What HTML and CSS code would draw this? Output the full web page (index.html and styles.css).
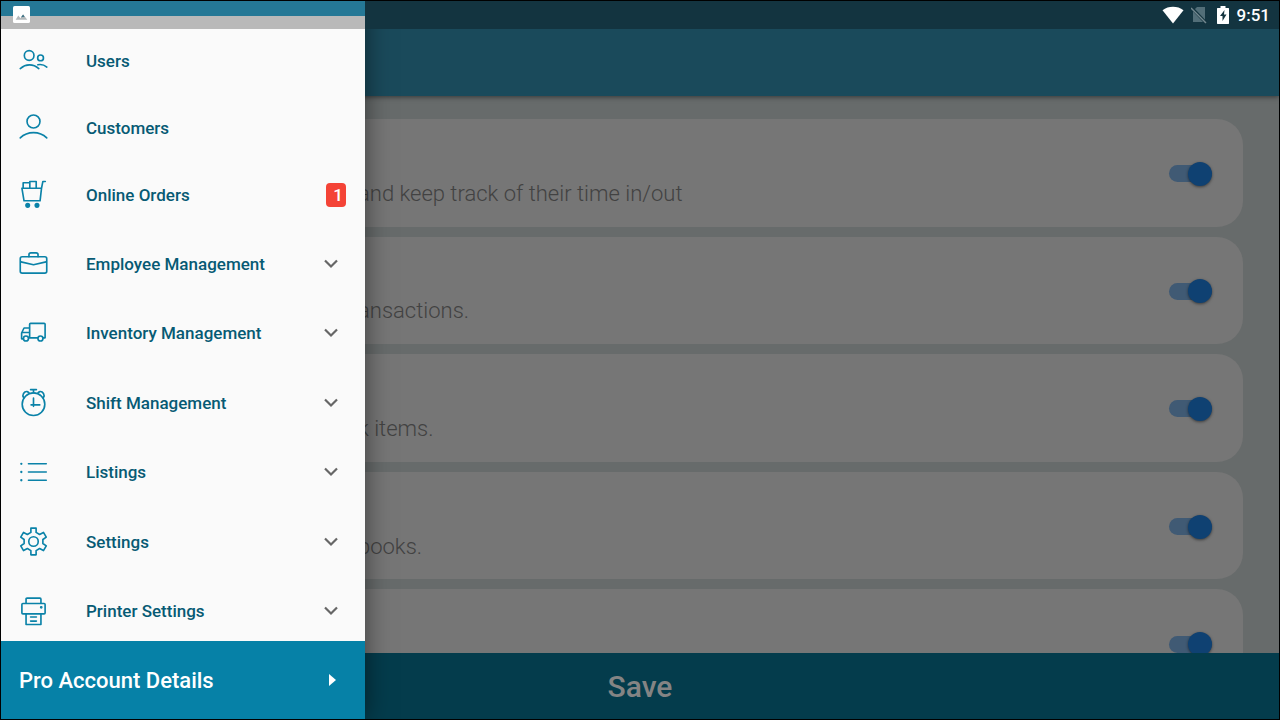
FILE: index.html
```html
<!DOCTYPE html>
<html lang="en">
<head>
<meta charset="utf-8">
<title>Settings</title>
<link rel="stylesheet" href="styles.css">
</head>
<body>
<div class="screen">
  <header class="appbar"></header>
  <main class="content">
    <ul class="cards">
      <li class="card"><label class="note" for="s1">and keep track of their time in/out</label><input class="switch" id="s1" type="checkbox" role="switch" checked></li>
      <li class="card"><label class="note" for="s2">ansactions.</label><input class="switch" id="s2" type="checkbox" role="switch" checked></li>
      <li class="card"><label class="note" for="s3">k items.</label><input class="switch" id="s3" type="checkbox" role="switch" checked></li>
      <li class="card"><label class="note" for="s4">books.</label><input class="switch" id="s4" type="checkbox" role="switch" checked></li>
      <li class="card"><input class="switch" id="s5" type="checkbox" role="switch" aria-label="Option" checked></li>
    </ul>
  </main>
  <button class="save" type="button">Save</button>

  <aside class="drawer">
    <nav class="menu">
      <ul class="group">
        <li><a class="item" href="#">
          <svg class="icon" viewBox="0 0 30 30"><circle cx="10.500" cy="9.800" r="5"/><circle cx="22.300" cy="12.300" r="3"/><path d="M1.300 23.300C7 18.400 14.500 18.200 20.500 23.300M19.500 19.400c3.300-.6 6.700.2 9.300 2.400"/></svg>
          <span class="label">Users</span></a></li>
        <li><a class="item" href="#">
          <svg class="icon" viewBox="0 0 30 30"><circle cx="15" cy="8.800" r="6.700"/><path d="M1.300 25.800c7.500-7.300 19.900-7.300 27.400 0"/></svg>
          <span class="label">Customers</span></a></li>
        <li><a class="item" href="#">
          <svg class="icon" viewBox="0 0 30 30"><path d="M3 8.500h20.300l-1.500 13H5.200zM4.300 8.500V2.800h6.900v5.700M11.200 8.500V1.500h6.600v7M23.300 8.500l1.400-7h2.500"/><circle class="solid" cx="9" cy="26.200" r="1.800"/><circle class="solid" cx="18.600" cy="26.200" r="1.800"/></svg>
          <span class="label">Online Orders</span><span class="badge">1</span></a></li>
      </ul>
      <ul class="group group-wide">
        <li><button class="item" type="button">
          <svg class="icon" viewBox="0 0 30 30"><rect x="1.300" y="8" width="27.400" height="17" rx="2"/><path d="M10.300 8V6q0-2 2-2h5.400q2 0 2 2v2M2 13.300l13 3 13-3"/></svg>
          <span class="label">Employee Management</span><svg class="chevron" viewBox="0 0 16 10"><path d="M2 1.500l6 6 6-6"/></svg></button></li>
        <li><button class="item" type="button">
          <svg class="icon" viewBox="0 0 30 30"><path d="M4.500 20.500H2.700v-6l2.500-5.200H11M11 19.500V5.500q0-1 1-1h14q1 0 1 1v14h-2M19.300 19.500H10M3 14h8"/><circle cx="7.200" cy="20.200" r="2.600"/><circle cx="22.200" cy="20.200" r="2.600"/></svg>
          <span class="label">Inventory Management</span><svg class="chevron" viewBox="0 0 16 10"><path d="M2 1.500l6 6 6-6"/></svg></button></li>
        <li><button class="item" type="button">
          <svg class="icon" viewBox="0 0 30 30"><circle cx="15" cy="16.800" r="11.700"/><path d="M15 10.500v8.500M12.500 17.500h9M12 1.700h6M15 1.700v3.300M4.800 10C2.800 7.200 5.300 3.300 8.400 3.700q1.500.3 2.300 1.800M25.200 10c2-2.800-.5-6.700-3.600-6.300q-1.500.3-2.300 1.800"/></svg>
          <span class="label">Shift Management</span><svg class="chevron" viewBox="0 0 16 10"><path d="M2 1.500l6 6 6-6"/></svg></button></li>
        <li><button class="item" type="button">
          <svg class="icon" viewBox="0 0 30 30"><path d="M9.800 6h18.400M9.800 14.500h18.400M9.800 23h18.400"/><path class="dots" d="M2.400 6h.01M2.400 14.500h.01M2.400 23h.01"/></svg>
          <span class="label">Listings</span><svg class="chevron" viewBox="0 0 16 10"><path d="M2 1.500l6 6 6-6"/></svg></button></li>
        <li><button class="item" type="button">
          <svg class="icon" viewBox="0 0 30 30"><circle cx="15" cy="15" r="4.900"/><path d="M12.300 1.200h5.400v4.400l3.600 2.100 4-2.100 2.900 4.900-3.500 2.400v4.200l3.500 2.400-2.900 4.900-4-2.100-3.600 2.100v4.400h-5.400v-4.400l-3.600-2.100-4 2.100-2.900-4.900 3.500-2.400v-4.200l-3.500-2.400 2.900-4.900 4 2.100 3.600-2.100z"/></svg>
          <span class="label">Settings</span><svg class="chevron" viewBox="0 0 16 10"><path d="M2 1.500l6 6 6-6"/></svg></button></li>
        <li><button class="item" type="button">
          <svg class="icon" viewBox="0 0 30 30"><path d="M7.300 6.700V2.200q0-1 1-1h13.400q1 0 1 1v4.500M7.300 17.500H4q-1 0-1-1V7.700q0-1 1-1h22q1 0 1 1v8.800q0 1-1 1h-3.300M6 17.500h18M7.300 17.500v11h15.400v-11M12 20.700h6M12 24.900h6"/><circle class="solid" cx="23" cy="10.700" r=".6"/></svg>
          <span class="label">Printer Settings</span><svg class="chevron" viewBox="0 0 16 10"><path d="M2 1.500l6 6 6-6"/></svg></button></li>
      </ul>
    </nav>
    <button class="account" type="button"><span>Pro Account Details</span><svg class="arrow" viewBox="0 0 7 12"><path d="M0 0l7 6-7 6z"/></svg></button>
  </aside>

  <div class="statusbar">
    <div class="status-left">
      <svg class="picture" viewBox="0 0 16 16"><rect width="16" height="16" rx="1.500" fill="#fff"/><path d="M2.500 13l2.500-4 2 2.500 2.500-3.500 4 5z" fill="#b4b9bb"/><path d="M7.500 10.500l2-2.500 1.500 2z" fill="#3b7185"/></svg>
    </div>
    <div class="status-right">
      <svg class="wifi" viewBox="0 0 22 18"><path d="M11 17.500L.5 4.200C6.500-.4 15.500-.4 21.500 4.200z" fill="#fff"/></svg>
      <svg class="sim" viewBox="0 0 16 18"><path d="M6 1h8v15H2V5z" fill="#526e78"/><path d="M0 1l15 16" stroke="#14343f" stroke-width="3"/><path d="M0 2l15 15" stroke="#73878f" stroke-width="1.500"/></svg>
      <svg class="battery" viewBox="0 0 12 18"><path d="M.5 2h3V0h5v2h3l.5.500v15l-.5.500H.5l-.5-.5v-15z" fill="#fff"/><path d="M7.500 4L3 10h2.500v5L9.500 8.500H7z" fill="#14343f"/></svg>
      <time class="clock">9:51</time>
    </div>
  </div>
</div>
</body>
</html>
```
FILE: styles.css
```css
* { box-sizing: border-box; }

body {
  margin: 0;
  font-family: Roboto, "Liberation Sans", sans-serif;
}

ul { list-style: none; margin: 0; padding: 0; }

button { border: 0; margin: 0; font: inherit; text-align: left; cursor: pointer; }

.screen {
  position: relative;
  display: flex;
  flex-direction: column;
  height: 100vh;
  border: 1px solid #000;
  overflow: hidden;
  background: #676b6b;
}

.appbar {
  flex: none;
  height: 95px;
  background: #1a4a5b;
  box-shadow: 0 1px 5px rgba(0, 0, 0, 0.5);
  z-index: 1;
}

.content {
  flex: 1;
  min-height: 0;
  overflow: hidden;
  padding: 23px 36px 0;
}

.cards {
  display: grid;
  grid-auto-rows: 1fr;
  gap: 10px;
  min-height: 578px;
}

.card {
  display: flex;
  align-items: center;
  padding: 2px 31px 0 321px;
  border-radius: 26px;
  background: #767676;
}

.note {
  padding-top: 40px;
  font-size: 22px;
  line-height: 28px;
  font-weight: 300;
  color: #424242;
}

.switch {
  appearance: none;
  display: flex;
  align-items: center;
  justify-content: flex-end;
  width: 43px;
  height: 17px;
  margin: 0 0 0 auto;
  border-radius: 9px;
  background: #405a74;
}

.switch::before {
  content: "";
  width: 24px;
  height: 24px;
  flex: none;
  border-radius: 50%;
  background: #0f4172;
  box-shadow: 0 1px 3px rgba(0, 0, 0, 0.5);
}

.save {
  flex: none;
  height: 66px;
  padding: 0;
  background: #043c4c;
  color: #848484;
  font-size: 30px;
  font-weight: 500;
  text-align: center;
}

.drawer {
  position: absolute;
  inset: 0 auto 0 0;
  z-index: 2;
  display: flex;
  flex-direction: column;
  width: 364px;
  padding-top: 26px;
  background: #fafafa;
  box-shadow: 0 0 24px rgba(0, 0, 0, 0.5);
}

.menu { flex: 1; min-height: 0; overflow: hidden; }

.group { display: grid; grid-auto-rows: 67px; }

.group-wide { grid-auto-rows: 1fr; min-height: 418px; padding-top: 1px; }

.item {
  display: flex;
  align-items: center;
  width: 100%;
  height: 100%;
  padding: 0 19px 0 18px;
  background: none;
  color: #075a74;
  font-size: 17px;
  font-weight: 500;
  text-decoration: none;
}

.icon {
  width: 29px;
  height: 29px;
  margin-right: 38px;
  fill: none;
  stroke: #0a82a8;
  stroke-width: 1.7;
  stroke-linecap: round;
  stroke-linejoin: round;
}

.solid { fill: #0a82a8; }
.dots { stroke-width: 2.4; }

.label { flex: 1; }

.badge {
  width: 20px;
  padding-right: 3px;
  border-radius: 4px;
  background: #f44336;
  color: #fff;
  font-size: 17px;
  line-height: 24px;
  text-align: right;
}

.chevron {
  width: 16px;
  height: 10px;
  margin-right: 7px;
  fill: none;
  stroke: #666;
  stroke-width: 2.2;
}

.account {
  flex: none;
  display: flex;
  align-items: center;
  justify-content: space-between;
  height: 78px;
  padding: 0 29px 0 18px;
  background: #0681a7;
  color: #fff;
  font-size: 22px;
  font-weight: 500;
}

.arrow { width: 7px; height: 12px; fill: #fff; }

.statusbar {
  position: absolute;
  inset: 0 0 auto 0;
  z-index: 3;
  display: flex;
  height: 28px;
  color: #fff;
}

.status-left {
  width: 364px;
  padding: 5px 0 0 12px;
  background: linear-gradient(#257896 15px, #b9b9b9 15px);
}

.status-right {
  flex: 1;
  display: flex;
  align-items: center;
  justify-content: flex-end;
  padding-right: 9px;
  background: #133440;
}

.picture { display: block; width: 17px; height: 17px; }
.wifi { width: 22px; height: 18px; margin-right: 7px; }
.sim { width: 16px; height: 18px; margin-right: 10px; }
.battery { width: 12px; height: 18px; margin-right: 8px; }

.clock { font-size: 17px; line-height: 28px; font-weight: 500; }
```
